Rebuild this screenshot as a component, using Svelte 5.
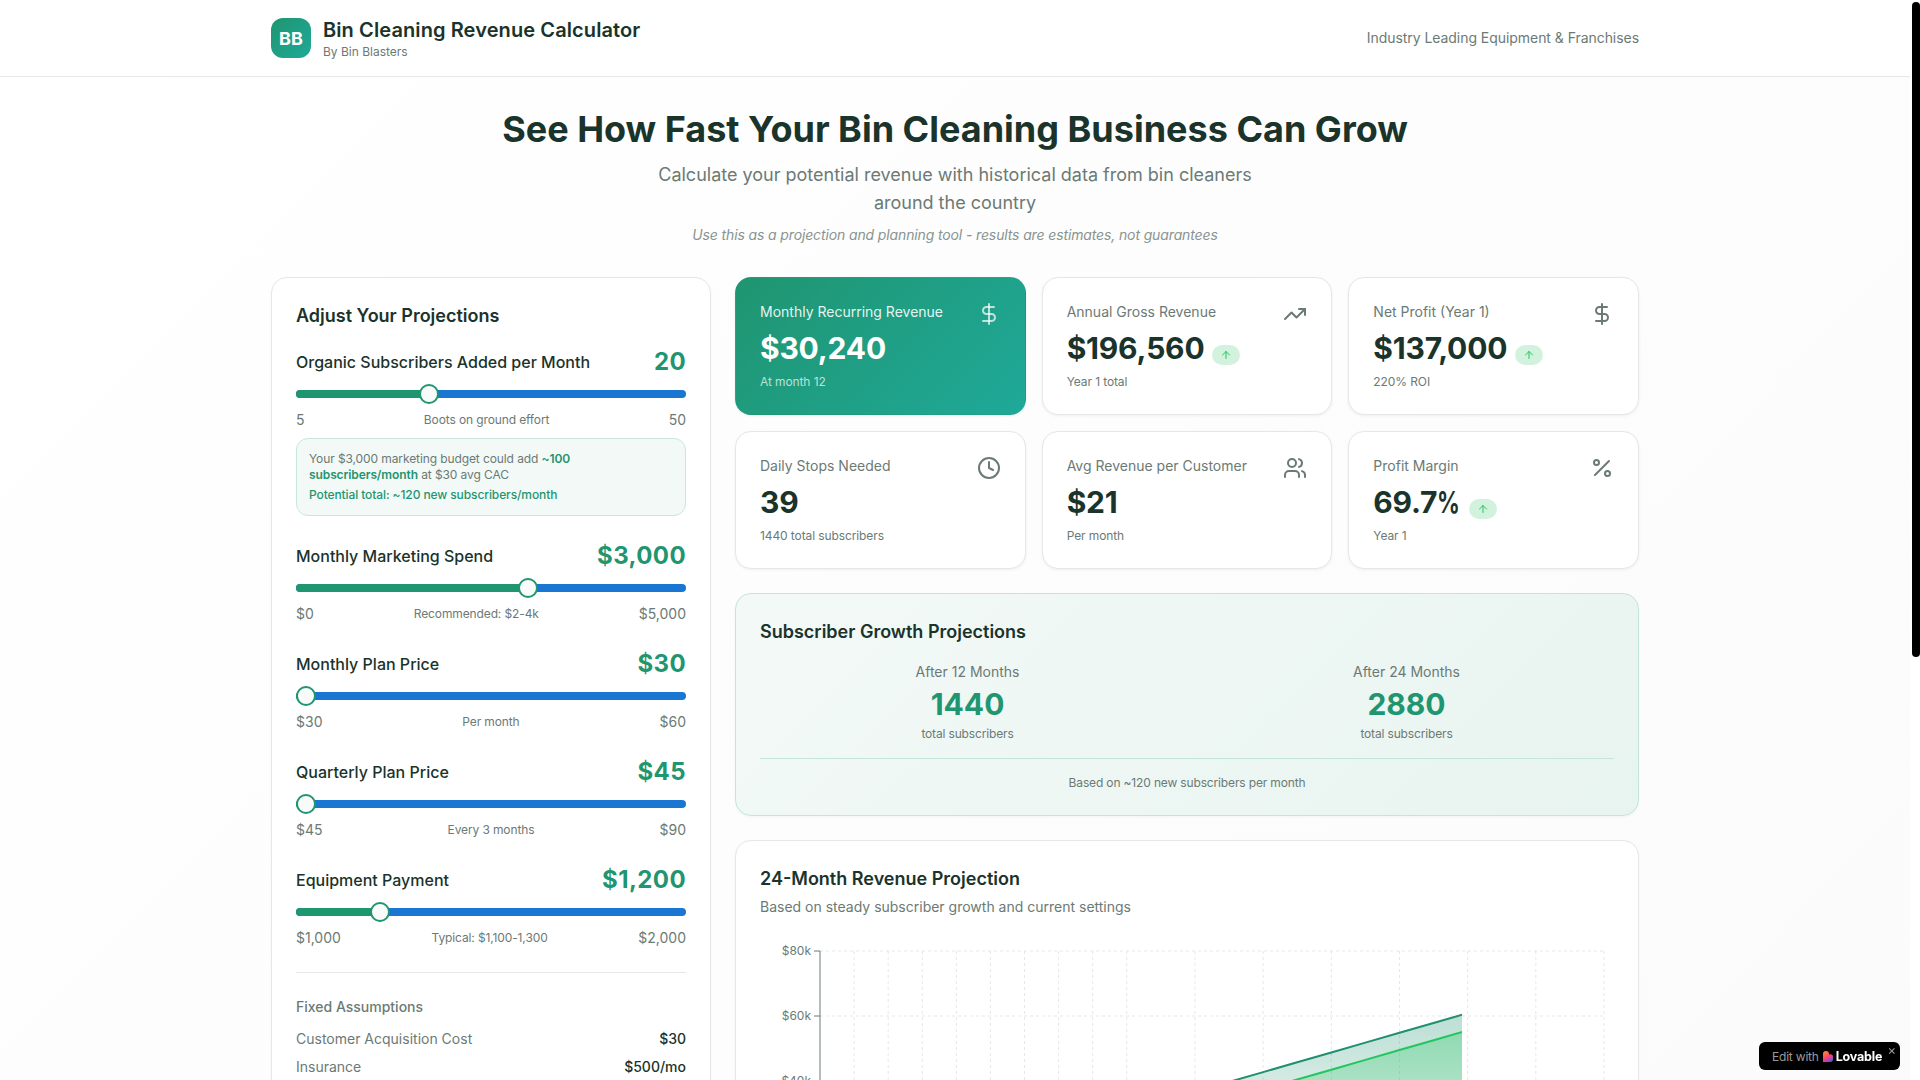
<script>
  const sliders = [
    { label: 'Organic Subscribers Added per Month', value: 20, shown: '20', min: 5, max: 50, low: '5', note: 'Boots on ground effort', high: '50' },
    { label: 'Monthly Marketing Spend', value: 3000, shown: '$3,000', min: 0, max: 5000, low: '$0', note: 'Recommended: $2-4k', high: '$5,000' },
    { label: 'Monthly Plan Price', value: 30, shown: '$30', min: 30, max: 60, low: '$30', note: 'Per month', high: '$60' },
    { label: 'Quarterly Plan Price', value: 45, shown: '$45', min: 45, max: 90, low: '$45', note: 'Every 3 months', high: '$90' },
    { label: 'Equipment Payment', value: 1200, shown: '$1,200', min: 1000, max: 2000, low: '$1,000', note: 'Typical: $1,100-1,300', high: '$2,000' },
  ]

  const stats = [
    { label: 'Monthly Recurring Revenue', value: '$30,240', sub: 'At month 12', icon: 'dollar', primary: true },
    { label: 'Annual Gross Revenue', value: '$196,560', sub: 'Year 1 total', icon: 'trend', up: true },
    { label: 'Net Profit (Year 1)', value: '$137,000', sub: '220% ROI', icon: 'dollar', up: true },
    { label: 'Daily Stops Needed', value: '39', sub: '1440 total subscribers', icon: 'clock' },
    { label: 'Avg Revenue per Customer', value: '$21', sub: 'Per month', icon: 'users' },
    { label: 'Profit Margin', value: '69.7', unit: '%', sub: 'Year 1', icon: 'percent', up: true },
  ]

  const growth = [
    { label: 'After 12 Months', value: 1440 },
    { label: 'After 24 Months', value: 2880 },
  ]

  // thumb stays inside the track, same as a radix slider
  function thumbLeft(s) {
    const pct = (s.value - s.min) / (s.max - s.min)
    return `calc(10px + (100% - 20px) * ${pct})`
  }

  // chart geometry
  const W = 853
  const H = 300
  const left = 60
  const right = 844
  const top = 10
  const pxPerK = 65 / 20
  const y = v => top + (80 - v / 1000) * pxPerK
  const x = i => left + (right - left) * i / 23
  const base = y(0)

  const months = Array.from({ length: 24 }, (_, i) => i)
  const vTicks = [...months.slice(1, 10), 11, 13, 15, 17, 19, 21, 23]
  const hTicks = [80, 60, 40, 20, 0]

  const revPts = months.map(i => `${x(i)},${y(3024 * (i + 1) + 400)}`)
  const profitPts = months.map(i => `${x(i)},${y(3024 * (i + 1) - 4900)}`)
  const revLine = revPts.join(' ')
  const profitLine = profitPts.join(' ')
  const revArea = `${left},${base} ${revLine} ${right},${base}`
  const profitArea = `${left},${base} ${profitLine} ${right},${base}`
</script>

{#snippet icon(name)}
  <svg class="stat-icon" viewBox="0 0 24 24" fill="none" stroke="currentColor" stroke-width="2" stroke-linecap="round" stroke-linejoin="round">
    {#if name === 'dollar'}
      <line x1="12" x2="12" y1="2" y2="22" />
      <path d="M17 5H9.5a3.5 3.5 0 0 0 0 7h5a3.5 3.5 0 0 1 0 7H6" />
    {:else if name === 'trend'}
      <polyline points="22 7 13.5 15.5 8.5 10.5 2 17" />
      <polyline points="16 7 22 7 22 13" />
    {:else if name === 'clock'}
      <circle cx="12" cy="12" r="10" />
      <polyline points="12 6 12 12 16 14" />
    {:else if name === 'users'}
      <path d="M16 21v-2a4 4 0 0 0-4-4H6a4 4 0 0 0-4 4v2" />
      <circle cx="9" cy="7" r="4" />
      <path d="M22 21v-2a4 4 0 0 0-3-3.87" />
      <path d="M16 3.13a4 4 0 0 1 0 7.75" />
    {:else if name === 'percent'}
      <line x1="19" x2="5" y1="5" y2="19" />
      <circle cx="6.5" cy="6.5" r="2.5" />
      <circle cx="17.5" cy="17.5" r="2.5" />
    {/if}
  </svg>
{/snippet}

<div class="page">
  <header class="topbar">
    <div class="topbar-in">
      <div class="brand">
        <div class="logo">BB</div>
        <div>
          <div class="brand-title">Bin Cleaning Revenue Calculator</div>
          <div class="brand-sub">By Bin Blasters</div>
        </div>
      </div>
      <div class="tagline">Industry Leading Equipment &amp; Franchises</div>
    </div>
  </header>

  <main class="main">
    <section class="hero">
      <h1>See How Fast Your Bin Cleaning Business Can Grow</h1>
      <p class="hero-sub">Calculate your potential revenue with historical data from bin cleaners around the country</p>
      <p class="hero-note">Use this as a projection and planning tool - results are estimates, not guarantees</p>
    </section>

    <div class="layout">
      <aside class="card controls">
        <h2>Adjust Your Projections</h2>

        {#each sliders as s, i (s.label)}
          <div class="slider-block">
            <div class="slider-head">
              <span class="slider-label">{s.label}</span>
              <span class="slider-value">{s.shown}</span>
            </div>
            <div class="slider">
              <div class="track">
                <div class="range" style:width={thumbLeft(s)}></div>
              </div>
              <div class="thumb" style:left={thumbLeft(s)}></div>
            </div>
            <div class="slider-foot">
              <span>{s.low}</span>
              <span class="foot-note">{s.note}</span>
              <span>{s.high}</span>
            </div>
            {#if i === 0}
              <div class="budget">
                <p>Your $3,000 marketing budget could add <strong>~100 subscribers/month</strong> at $30 avg CAC</p>
                <p class="budget-total">Potential total: ~120 new subscribers/month</p>
              </div>
            {/if}
          </div>
        {/each}

        <div class="fixed">
          <div class="fixed-title">Fixed Assumptions</div>
          <div class="fixed-row"><span>Customer Acquisition Cost</span><b>$30</b></div>
          <div class="fixed-row"><span>Insurance</span><b>$500/mo</b></div>
        </div>
      </aside>

      <div class="results">
        <div class="stats">
          {#each stats as st (st.label)}
            <div class="stat" class:primary={st.primary}>
              <div class="stat-head">
                <span>{st.label}</span>
                {@render icon(st.icon)}
              </div>
              <div class="stat-value">
                <span>{st.value}{#if st.unit}<span class="unit">{st.unit}</span>{/if}</span>
                {#if st.up}
                  <span class="up">
                    <svg viewBox="0 0 24 24" fill="none" stroke="currentColor" stroke-width="2" stroke-linecap="round" stroke-linejoin="round">
                      <path d="m5 12 7-7 7 7" />
                      <path d="M12 19V5" />
                    </svg>
                  </span>
                {/if}
              </div>
              <div class="stat-sub">{st.sub}</div>
            </div>
          {/each}
        </div>

        <section class="card growth">
          <h2>Subscriber Growth Projections</h2>
          <div class="growth-cols">
            {#each growth as g (g.label)}
              <div>
                <div class="growth-label">{g.label}</div>
                <div class="growth-value">{g.value}</div>
                <div class="growth-sub">total subscribers</div>
              </div>
            {/each}
          </div>
          <div class="growth-foot">Based on ~120 new subscribers per month</div>
        </section>

        <section class="card chart-card">
          <h2>24-Month Revenue Projection</h2>
          <p class="chart-sub">Based on steady subscriber growth and current settings</p>
          <svg class="chart" width={W} height={H} viewBox="0 0 {W} {H}">
            <defs>
              <linearGradient id="revFill" x1="0" y1="0" x2="0" y2="1">
                <stop offset="5%" stop-color="#1f9570" stop-opacity="0.35" />
                <stop offset="95%" stop-color="#1f9570" stop-opacity="0" />
              </linearGradient>
              <linearGradient id="profitFill" x1="0" y1="0" x2="0" y2="1">
                <stop offset="5%" stop-color="#22c55e" stop-opacity="0.35" />
                <stop offset="95%" stop-color="#22c55e" stop-opacity="0.05" />
              </linearGradient>
              <!-- the reference caught the draw-in animation at this x -->
              <clipPath id="reveal"><rect x={left - 2} y="0" width="644" height={H} /></clipPath>
            </defs>

            {#each hTicks as t}
              <line class="grid" x1={left} x2={right} y1={y(t * 1000)} y2={y(t * 1000)} />
            {/each}
            {#each vTicks as i}
              <line class="grid" x1={x(i)} x2={x(i)} y1={top} y2={base} />
            {/each}

            <g clip-path="url(#reveal)">
              <polygon points={revArea} fill="url(#revFill)" />
              <polygon points={profitArea} fill="url(#profitFill)" />
              <polyline points={revLine} fill="none" stroke="#1f8f6f" stroke-width="2" />
              <polyline points={profitLine} fill="none" stroke="#22c55e" stroke-width="2" />
            </g>

            <line class="axis" x1={left} x2={left} y1={top} y2={base} />
            {#each hTicks as t}
              <line class="axis" x1={left - 6} x2={left} y1={y(t * 1000)} y2={y(t * 1000)} />
              <text class="tick" x={left - 9} y={y(t * 1000) + 4} text-anchor="end">${t}k</text>
            {/each}
          </svg>
        </section>
      </div>
    </div>
  </main>

  <div class="scroll-thumb"></div>

  <div class="lovable">
    <span class="lovable-edit">Edit with</span>
    <svg class="lovable-heart" viewBox="0 0 10 11">
      <defs>
        <linearGradient id="heartFill" x1="0.2" y1="0" x2="0.7" y2="1">
          <stop offset="0%" stop-color="#ff8a2b" />
          <stop offset="55%" stop-color="#fb3f78" />
          <stop offset="100%" stop-color="#5a55f0" />
        </linearGradient>
      </defs>
      <path d="M3 0a3 3 0 0 1 3 3v.6A2.6 2.6 0 0 1 10 6v2a3 3 0 0 1-3 3H0V3a3 3 0 0 1 3-3z" fill="url(#heartFill)" />
    </svg>
    <span class="lovable-name">Lovable</span>
    <span class="lovable-x">×</span>
  </div>
</div>

<style>
  :global(body) {
    margin: 0;
    overflow: hidden;
    background: #fff;
    font-family: Inter, 'Liberation Sans', sans-serif;
  }

  .page {
    width: calc(100vw - 10px);
    height: 100vh;
    overflow: hidden;
    background: linear-gradient(135deg, #ffffff, #fafafa) no-repeat;
    background-size: 100% 1775px;
    color: #1a332b;
  }

  .topbar { background: #fff; border-bottom: 1px solid #e5e8e7; }
  .topbar-in,
  .main {
    max-width: 1368px;
    margin: 0 auto;
    padding-left: 16px;
    padding-right: 16px;
  }
  .topbar-in {
    display: flex;
    align-items: center;
    justify-content: space-between;
    padding-top: 16px;
    padding-bottom: 16px;
  }
  .brand { display: flex; align-items: center; gap: 12px; }
  .logo {
    width: 40px;
    height: 40px;
    border-radius: 12px;
    background: linear-gradient(135deg, #1f9570, #1fa999);
    color: #fff;
    font-weight: 700;
    font-size: 18px;
    display: flex;
    align-items: center;
    justify-content: center;
  }
  .brand-title { font-size: 20px; line-height: 28px; font-weight: 600; letter-spacing: .1px; }
  .brand-sub { font-size: 12px; line-height: 16px; color: #6b7a75; }
  .tagline { font-size: 14px; line-height: 20px; color: #6b7a75; letter-spacing: -.05px; }

  .main { padding-top: 32px; }

  .hero { text-align: center; margin-bottom: 32px; }
  h1 { margin: 0 0 12px; font-size: 36px; line-height: 40px; font-weight: 700; }
  .hero-sub {
    margin: 0 auto;
    width: 600px;
    font-size: 18px;
    line-height: 28px;
    color: #6b7a75;
  }
  .hero-note {
    margin: 8px 0 0;
    font-size: 14px;
    line-height: 20px;
    font-style: italic;
    letter-spacing: -.13px;
    color: #6b7a75;
    opacity: .8;
  }

  .layout {
    display: grid;
    grid-template-columns: 440px minmax(0, 1fr);
    gap: 24px;
    align-items: start;
  }

  .card {
    background: #fff;
    border: 1px solid #e5e8e7;
    border-radius: 16px;
    padding: 24px;
    box-shadow: 0 1px 3px rgba(0, 0, 0, .04);
  }
  h2 { margin: 0; font-size: 18px; line-height: 28px; font-weight: 600; }

  .controls h2 { margin-bottom: 16px; }
  .slider-block + .slider-block { margin-top: 24px; }
  .slider-head { display: flex; align-items: center; justify-content: space-between; height: 32px; }
  .slider-label { font-size: 16px; font-weight: 500; }
  .slider-value { font-size: 24px; line-height: 32px; font-weight: 700; letter-spacing: .4px; color: #1f9570; }

  .slider { position: relative; height: 20px; margin-top: 6px; display: flex; align-items: center; }
  .track { width: 100%; height: 8px; border-radius: 999px; background: #1976d2; overflow: hidden; }
  .range { height: 100%; background: #1f9570; }
  .thumb {
    position: absolute;
    top: 0;
    width: 20px;
    height: 20px;
    box-sizing: border-box;
    margin-left: -10px;
    border-radius: 50%;
    border: 2px solid #1f9570;
    background: #f8fbfa;
  }

  .slider-foot {
    margin-top: 6px;
    display: flex;
    align-items: center;
    justify-content: space-between;
    font-size: 14px;
    line-height: 20px;
    color: #6b7a75;
  }
  .foot-note { font-size: 12px; letter-spacing: -.12px; }

  .budget {
    margin-top: 8px;
    padding: 12px;
    border: 1px solid #c9e6dc;
    border-radius: 12px;
    background: #f3f9f7;
    font-size: 12px;
    line-height: 16px;
    letter-spacing: -.1px;
    color: #6b7a75;
  }
  .budget p { margin: 0; }
  .budget strong { color: #1f9570; font-weight: 600; }
  .budget .budget-total { margin-top: 4px; color: #1f9570; font-weight: 500; }

  .fixed { margin-top: 24px; border-top: 1px solid #e5e8e7; padding-top: 24px; font-size: 14px; line-height: 20px; }
  .fixed-title { color: #6b7a75; font-weight: 500; margin-bottom: 12px; }
  .fixed-row { display: flex; justify-content: space-between; color: #6b7a75; }
  .fixed-row + .fixed-row { margin-top: 8px; }
  .fixed-row b { color: #1a332b; font-weight: 500; }

  .results { display: flex; flex-direction: column; gap: 24px; min-width: 0; }
  .stats { display: grid; grid-template-columns: repeat(3, minmax(0, 1fr)); gap: 16px; }

  .stat {
    background: #fff;
    border: 1px solid #e5e8e7;
    border-radius: 16px;
    padding: 24px;
    box-shadow: 0 1px 3px rgba(0, 0, 0, .06);
  }
  .stat-head {
    display: flex;
    align-items: flex-start;
    justify-content: space-between;
    font-size: 14px;
    line-height: 20px;
    color: #6b7a75;
    margin-bottom: 4px;
  }
  .stat-icon { width: 24px; height: 24px; flex: none; }
  .stat-value {
    display: flex;
    align-items: flex-end;
    gap: 8px;
    font-size: 30px;
    line-height: 36px;
    font-weight: 700;
    letter-spacing: -.2px;
  }
  .unit { display: inline-block; margin-right: -7px; transform: scaleX(.75); transform-origin: left; }
  .stat-sub { margin-top: 8px; font-size: 12px; line-height: 16px; letter-spacing: -.1px; color: #6b7a75; }

  .up {
    display: inline-flex;
    margin-bottom: 1px;
    padding: 4px 8px;
    border-radius: 999px;
    background: #d3f2de;
    color: #22c55e;
  }
  .up svg { width: 12px; height: 12px; }

  .stat.primary {
    border-color: transparent;
    background: linear-gradient(135deg, #1f9570, #1fa999);
    color: #fff;
  }
  .primary .stat-head { color: rgba(255, 255, 255, .9); }
  .primary .stat-icon { color: rgba(255, 255, 255, .7); }
  .primary .stat-sub { color: rgba(255, 255, 255, .7); }

  .growth {
    border-color: #c3e5da;
    background: linear-gradient(135deg, #f3f9f7, #e8f4f0);
  }
  .growth-cols {
    margin-top: 16px;
    display: grid;
    grid-template-columns: 1fr 1fr;
    gap: 24px;
    text-align: center;
  }
  .growth-label { font-size: 14px; line-height: 20px; color: #6b7a75; }
  .growth-value { margin-top: 4px; font-size: 30px; line-height: 36px; font-weight: 700; color: #1f9570; }
  .growth-sub { margin-top: 4px; font-size: 12px; line-height: 16px; letter-spacing: -.15px; color: #6b7a75; }
  .growth-foot {
    margin-top: 16px;
    padding-top: 16px;
    border-top: 1px solid #c3e5da;
    text-align: center;
    font-size: 12px;
    line-height: 16px;
    letter-spacing: -.15px;
    color: #6b7a75;
  }

  .chart-sub { margin: 4px 0 24px; font-size: 14px; line-height: 20px; color: #6b7a75; }
  .chart { display: block; }
  .grid { stroke: #e5e8e7; stroke-width: 1; stroke-dasharray: 3 3; }
  .axis { stroke: #6b7a75; stroke-width: 1; }
  .tick { font-size: 12px; fill: #6b7a75; }

  .scroll-thumb {
    position: fixed;
    top: 2px;
    right: 0;
    width: 8px;
    height: 655px;
    border-radius: 4px;
    background: #000;
  }

  .lovable {
    position: fixed;
    right: 20px;
    bottom: 10px;
    width: 141px;
    height: 28px;
    box-sizing: border-box;
    padding-left: 13px;
    display: flex;
    align-items: center;
    border-radius: 6px;
    background: #000;
  }
  .lovable-edit { font-size: 12px; letter-spacing: -.2px; color: #9b9b9b; }
  .lovable-heart { width: 10px; height: 11px; margin-left: 4px; }
  .lovable-name { margin-left: 3px; font-size: 12.5px; font-weight: 700; color: #fff; letter-spacing: -.2px; }
  .lovable-x { position: absolute; top: 1px; right: 4px; font-size: 13px; line-height: 14px; color: #9b9b9b; }
</style>
